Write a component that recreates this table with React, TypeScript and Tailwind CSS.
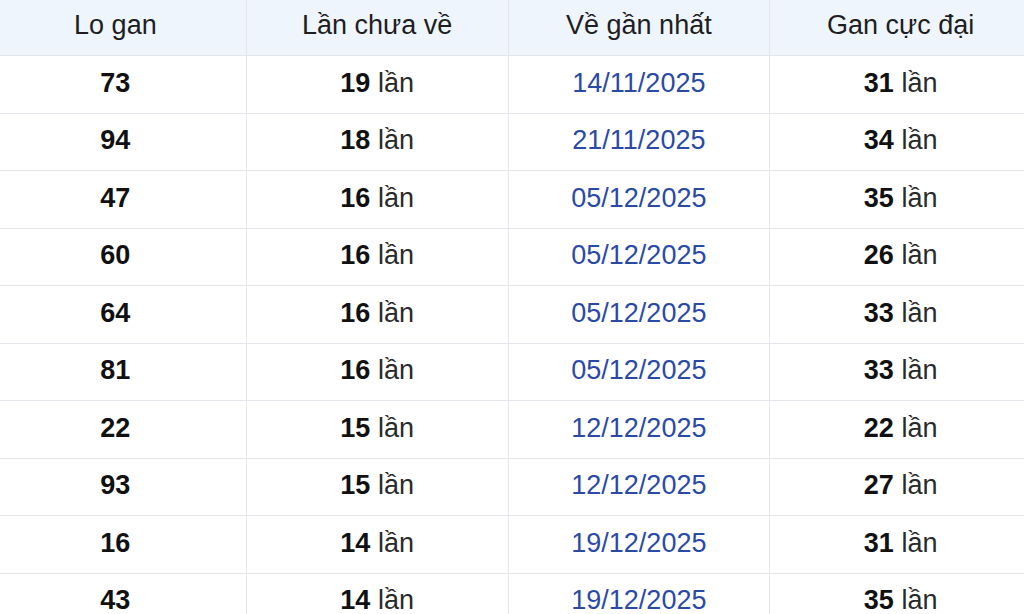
import React from "react";

const rows: [string, string, string, string][] = [
  ["73", "19", "14/11/2025", "31"],
  ["94", "18", "21/11/2025", "34"],
  ["47", "16", "05/12/2025", "35"],
  ["60", "16", "05/12/2025", "26"],
  ["64", "16", "05/12/2025", "33"],
  ["81", "16", "05/12/2025", "33"],
  ["22", "15", "12/12/2025", "22"],
  ["93", "15", "12/12/2025", "27"],
  ["16", "14", "19/12/2025", "31"],
  ["43", "14", "19/12/2025", "35"],
];

export default function App() {
  return (
    <div className="w-[1024px] h-[614px] overflow-hidden bg-white" style={{ fontFamily: '"Liberation Sans", Arial, sans-serif' }}>
      <table className="ml-[-16px] mt-[-1px] w-[1048px] border-collapse table-fixed text-[27px] text-center">
        <thead>
          <tr className="bg-[#eef5fc] h-[56px]">
            {["Lo gan", "Lần chưa về", "Về gần nhất", "Gan cực đại"].map((h) => (
              <th key={h} className="font-normal text-[#1e1e1e] border border-[#e3e6ea] p-0 align-middle pb-[4px]">
                {h}
              </th>
            ))}
          </tr>
        </thead>
        <tbody>
          {rows.map((r, i) => (
            <tr key={i} className="h-[57.5px]">
              <td className="border border-[#e3e6ea] font-bold text-[#111] p-0 pb-[3px]">{r[0]}</td>
              <td className="border border-[#e3e6ea] text-[#2a2a2a] p-0 pb-[3px]">
                <span className="font-bold text-[#111]">{r[1]}</span> lần
              </td>
              <td className="border border-[#e3e6ea] text-[#2b4aa6] p-0 pb-[3px]">{r[2]}</td>
              <td className="border border-[#e3e6ea] text-[#2a2a2a] p-0 pb-[3px]">
                <span className="font-bold text-[#111]">{r[3]}</span> lần
              </td>
            </tr>
          ))}
        </tbody>
      </table>
    </div>
  );
}
